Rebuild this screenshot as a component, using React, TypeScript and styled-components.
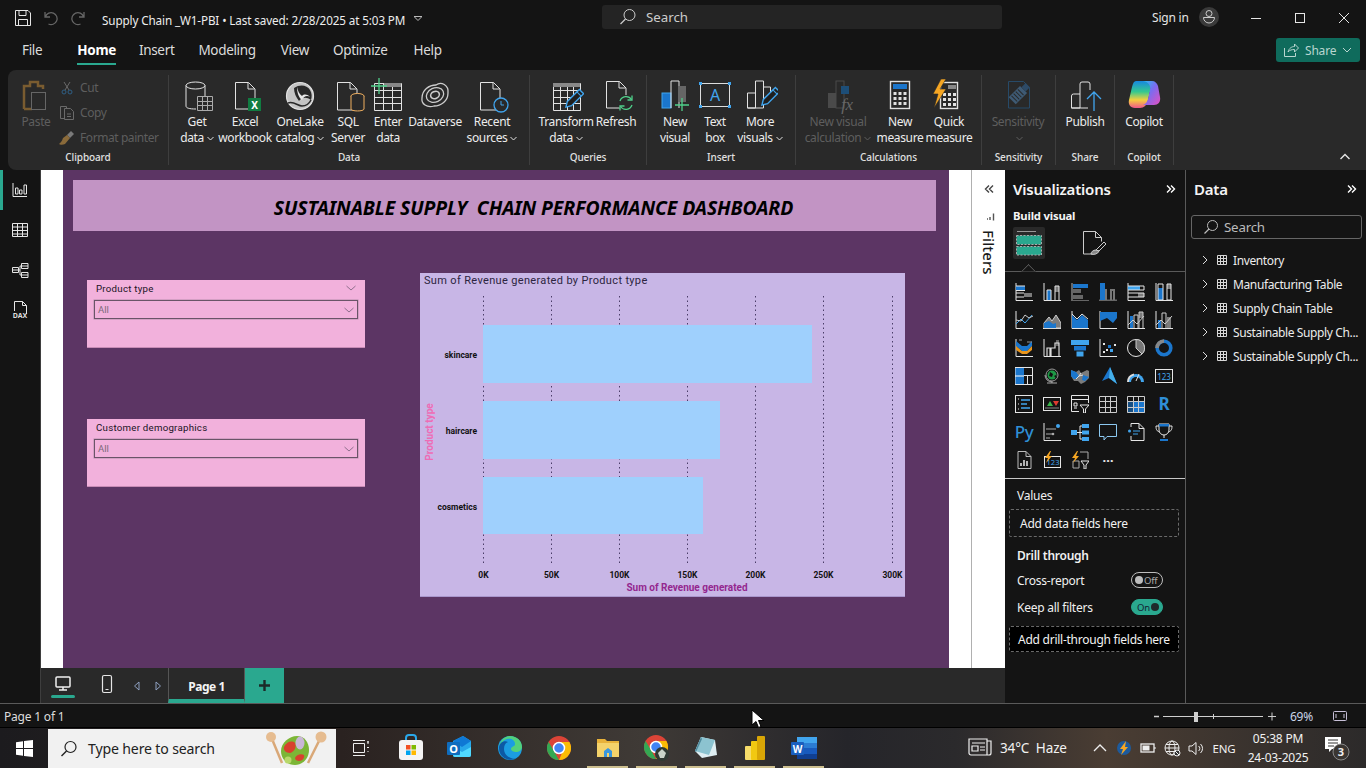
import React from "react";
import styled, { createGlobalStyle } from "styled-components";

const UI = '"Noto Sans", "Open Sans", sans-serif';
const DIN = 'Roboto, "Liberation Sans", sans-serif';

const Global = createGlobalStyle`
  html, body { margin: 0; padding: 0; background: #141414; overflow: hidden; }
  * { box-sizing: border-box; }
  #root { width: 1366px; height: 768px; }
`;

const Shell = styled.div`
  position: relative; width: 1366px; height: 768px; display: flex; flex-direction: column;
  background: #141414; color: #f0f0f0; font-family: ${UI}; font-size: 12px; overflow: hidden;
`;
const TitleBar = styled.div`height: 35px; display: flex; align-items: center; flex: none;`;
const QuickTools = styled.div`width: 102px; display: flex; align-items: center; gap: 11px; padding-left: 14px; flex: none;`;
const DocTitle = styled.div`width: 500px; display: flex; align-items: center; gap: 8px; padding-top: 4px; font-size: 11.7px; letter-spacing: -0.12px; color: #eee; white-space: nowrap; flex: none;`;
const SearchTop = styled.div`width: 400px; height: 24px; background: #242424; border-radius: 3px; display: flex; align-items: center; padding-left: 17px; gap: 9px; color: #ccc; font-size: 13.3px; flex: none; margin-bottom: 1px;`;
const Account = styled.div`margin-left: 150px; width: 62px; display: flex; align-items: center; gap: 10px; font-size: 12px; letter-spacing: -0.2px; color: #e4e4e4; white-space: nowrap; flex: none; margin-bottom: 1px;`;
const Avatar = styled.div`width: 20px; height: 20px; border-radius: 50%; background: #3a3a3a; display: flex; align-items: center; justify-content: center; flex: none;`;
const WinBtns = styled.div`margin-left: 20px; display: flex; gap: 0; flex: none;`;
const WinBtn = styled.div`width: 44px; height: 30px; display: flex; align-items: center; justify-content: center;`;

const MenuBar = styled.div`height: 35px; display: flex; align-items: center; flex: none; padding: 0 0 6px 22px; position: relative;`;
const MenuItem = styled.div<{ $active?: boolean; $gap: number }>`
  position: relative; font-size: 13.5px; letter-spacing: -0.33px; margin-right: ${p => p.$gap}px; line-height: 30px; color: ${p => (p.$active ? "#fff" : "#dcdcdc")}; font-weight: ${p => (p.$active ? 700 : 400)};
  ${p => p.$active && `&::after { content: ""; position: absolute; left: 0; right: 0; bottom: 0; height: 2px; background: #2aa88f; }`}
`;
const ShareBtn = styled.div`
  position: absolute; left: 1276px; top: 3px; width: 84px; height: 24px; background: #0f6b5c; border-radius: 3px;
  display: flex; align-items: center; gap: 6px; padding-left: 7px; color: #b9d6d0; font-size: 12px; letter-spacing: -0.2px;
`;

const Ribbon = styled.div`height: 100px; margin-left: 8px; flex: none; background: #292929; border-radius: 8px 0 0 8px; display: flex; position: relative; padding-top: 5px;`;
const Group = styled.div<{ $w: number; $pad?: number }>`
  width: ${p => p.$w}px; height: 90px; flex: none; border-right: 1px solid #3e3e3e; display: flex; flex-direction: column; padding-left: ${p => p.$pad || 0}px;
`;
const GroupBody = styled.div`height: 75px; display: flex; flex: none;`;
const GroupLabel = styled.div<{ $off?: number }>`
  height: 14px; line-height: 14px; font-size: 10px; letter-spacing: -0.1px; text-align: center; color: #e0e0e0; font-weight: 500; margin-left: ${p => -(p.$off || 0)}px;
`;
const RibBtn = styled.div<{ $w: number; $dim?: boolean }>`
  width: ${p => p.$w}px; flex: none; padding-top: 3px; display: flex; flex-direction: column; align-items: center;
  color: ${p => (p.$dim ? "#5e5e5e" : "#ececec")}; font-size: 12px; letter-spacing: -0.36px; line-height: 16px; text-align: center; white-space: nowrap;
`;
const RibIcon = styled.div`height: 36px; width: 36px; flex: none;`;
const Clip = styled.div`display: flex; padding-left: 8px;`;
const ClipList = styled.div`display: flex; flex-direction: column; margin-left: 2px;`;
const ClipRow = styled.div`height: 26px; display: flex; align-items: center; gap: 4px; color: #5e5e5e; font-size: 12px; letter-spacing: -0.42px; white-space: nowrap;`;
const ClipGlyph = styled.div`width: 18px; height: 18px; flex: none; display: flex; align-items: center; justify-content: center;`;
const Collapse = styled.div`position: absolute; left: 1331px; top: 81px;`;

const Main = styled.div`height: 534px; flex: none; display: flex; border-bottom: 1px solid #5a5a5a;`;
const Rail = styled.div`width: 41px; flex: none; border-right: 1px solid #3e3e3e; display: flex; flex-direction: column; position: relative;`;
const RailItem = styled.div<{ $on?: boolean }>`
  height: 40px; display: flex; align-items: center; justify-content: center; position: relative;
  ${p => p.$on && `&::before { content: ""; position: absolute; left: 0; top: 0; bottom: 0; width: 3px; background: #2aa88f; }`}
`;
const Center = styled.div`width: 964px; flex: none; display: flex; flex-direction: column;`;
const CanvasRow = styled.div`height: 498px; flex: none; display: flex;`;
const Canvas = styled.div`width: 930px; flex: none; background: #fff; padding-left: 22px;`;
const Page = styled.div`position: relative; width: 886px; height: 498px; background: #5c3564;`;
const Banner = styled.div`
  position: absolute; left: 10px; top: 10px; width: 863px; height: 51px; background: #c294c4; color: #000; display: flex; align-items: center; justify-content: center;
  padding: 4px 0 0 58px; font: italic 700 19.4px ${UI}; letter-spacing: -0.1px; white-space: pre;
`;
const Slicer = styled.div<{ $top: number }>`
  position: absolute; left: 24px; top: ${p => p.$top}px; width: 278px; height: 68px; background: #f2b1dc; border-bottom: 1px solid #c88bb6; padding: 0 7px;
`;
const SlicerHead = styled.div`height: 19px; display: flex; align-items: center; justify-content: space-between; padding: 0 1px 3px 2px; font: 400 9.7px ${DIN}; letter-spacing: 0.25px; color: #20141f;`;
const SlicerDrop = styled.div`height: 19px; margin-top: 1px; border: 1px solid #6a5468; box-shadow: 0 0 0 0.5px #b78cac; display: flex; align-items: center; justify-content: space-between; padding: 0 2px 0 3px; font: 400 9.5px ${DIN}; color: #7a6a7a;`;
const ChartCard = styled.div`position: absolute; left: 357px; top: 103px; width: 485px; height: 324px; background: #c8b6e6; border-bottom: 1px solid #a996cc;`;
const ChartTitle = styled.div`height: 17px; padding: 0 0 0 4px; font: 400 11px/15px ${DIN}; letter-spacing: 0.34px; color: #2c2440;`;

const FilterPane = styled.div`width: 34px; flex: none; background: #fff; border-left: 1px solid #b0b0b0; display: flex; flex-direction: column; align-items: center; color: #222;`;
const FilterCollapse = styled.div`margin-top: 14px; height: 10px;`;
const FilterGlyph = styled.div`margin: 18px 0 0 5px; height: 10px;`;
const FilterLabel = styled.div`writing-mode: vertical-rl; margin-top: 8px; font-size: 15px; font-weight: 500; line-height: 20px; letter-spacing: 0.1px; color: #1a1a1a;`;

const TabBar = styled.div`height: 35px; flex: none; background: #292929; display: flex; align-items: stretch;`;
const ViewBtn = styled.div<{ $w: number; $on?: boolean; $low?: boolean; $ml?: number }>`
  width: ${p => p.$w}px; margin-left: ${p => p.$ml || 0}px; flex: none; display: flex; align-items: center; justify-content: center; position: relative; padding-bottom: ${p => (p.$low ? 0 : 4)}px;
  ${p => p.$on && `&::after { content: ""; position: absolute; left: 10px; right: 10px; bottom: 5px; height: 3px; border-radius: 2px; background: #2aa88f; }`}
`;
const PageTab = styled.div`width: 77px; flex: none; border-left: 1px solid #555; border-right: 1px solid #555; border-bottom: 4px solid #2aa88f; display: flex; align-items: center; justify-content: center; font-size: 12px; font-weight: 700; letter-spacing: -0.45px; color: #f4f4f4; padding-top: 6px;`;
const AddTab = styled.div`width: 39px; flex: none; background: #2aa88f; display: flex; align-items: center; justify-content: center;`;

const Pane = styled.div<{ $w?: number }>`${p => (p.$w ? `width:${p.$w}px;flex:none;` : "flex:1;")} border-right: ${p => (p.$w ? "1px solid #5a5a5a" : "0")}; display: flex; flex-direction: column;`;
const PaneHead = styled.div`height: 38px; flex: none; display: flex; align-items: center; justify-content: space-between; padding: 0 9px 0 8px; font-size: 15px; font-weight: 600; letter-spacing: -0.2px; color: #f4f4f4;`;
const BuildLabel = styled.div`height: 14px; line-height: 14px; margin-top: 1px; padding-left: 8px; font-size: 11.3px; font-weight: 700; letter-spacing: -0.2px; color: #f4f4f4; flex: none;`;
const BuildTabs = styled.div`height: 32px; margin-top: 4px; padding-left: 8px; display: flex; align-items: center; flex: none;`;
const BuildTab = styled.div<{ $on?: boolean; $ml?: number }>`width: 32px; height: 32px; margin-left: ${p => p.$ml || 0}px; border-radius: 2px; background: ${p => (p.$on ? "#292929" : "transparent")}; display: flex; align-items: center; justify-content: center;`;
const Notched = styled.div`
  height: 1px; margin-top: 12px; background: #5a5a5a; position: relative; flex: none;
  &::after { content: ""; position: absolute; left: 18px; top: -5px; width: 10px; height: 10px; background: #141414; border-left: 1px solid #5a5a5a; border-top: 1px solid #5a5a5a; transform: rotate(45deg); clip-path: polygon(0 0, 100% 0, 0 100%); }
`;
const VizGrid = styled.div`display: grid; grid-template-columns: repeat(6, 28px); grid-auto-rows: 28px; padding: 6px 0 0 5px; height: 206px; flex: none;`;
const VizCell = styled.div`display: flex; align-items: center; justify-content: center;`;
const VizGlyph = styled.div<{ $size: number; $color: string; $weight: number; $pb: number }>`font-size: ${p => p.$size}px; line-height: 24px; padding-bottom: ${p => p.$pb}px; font-weight: ${p => p.$weight}; color: ${p => p.$color}; letter-spacing: -0.3px; white-space: nowrap;`;
const SolidRule = styled.div`height: 1px; background: #c8c8c8; flex: none;`;
const FieldLabel = styled.div<{ $bold?: boolean; $mt?: number }>`padding-left: 12px; height: 16px; line-height: 16px; margin-top: ${p => p.$mt || 0}px; font-size: 12px; letter-spacing: -0.25px; font-weight: ${p => (p.$bold ? 600 : 400)}; color: #f0f0f0; flex: none;`;
const DropWell = styled.div<{ $h: number; $black?: boolean; $mt: number; $pl: number }>`
  height: ${p => p.$h}px; margin: ${p => p.$mt}px 6px 0 4px; border: 1px dashed #6a6a6a; border-radius: 2px; background: ${p => (p.$black ? "#000" : "transparent")};
  display: flex; align-items: center; padding-left: ${p => p.$pl}px; font-size: 12px; letter-spacing: -0.25px; color: #f2f2f2; flex: none; white-space: nowrap;
`;
const ToggleRow = styled.div<{ $mt: number }>`display: flex; align-items: center; justify-content: space-between; height: 16px; margin-top: ${p => p.$mt}px; padding: 0 22px 0 12px; font-size: 12px; letter-spacing: -0.25px; color: #f0f0f0; flex: none;`;
const Toggle = styled.div<{ $on?: boolean }>`
  width: 32px; height: 16px; border-radius: 8px; display: flex; align-items: center; justify-content: ${p => (p.$on ? "flex-end" : "flex-start")}; gap: 1px; padding: 0 3px; font-size: 9.5px; letter-spacing: -0.2px;
  background: ${p => (p.$on ? "#2aa88f" : "transparent")}; border: 1px solid ${p => (p.$on ? "#2aa88f" : "#bdbdbd")}; color: ${p => (p.$on ? "#123" : "#aaa")};
`;
const Knob = styled.span<{ $on?: boolean }>`width: 8px; height: 8px; border-radius: 50%; background: ${p => (p.$on ? "#1f2b2b" : "#bdbdbd")}; flex: none;`;
const DataSearch = styled.div`height: 24px; margin: 7px 4px 0 5px; border: 1px solid #666; border-radius: 3px; display: flex; align-items: center; gap: 5px; padding-left: 11px; font-size: 13.3px; letter-spacing: -0.2px; color: #bbb; flex: none;`;
const TreeList = styled.div`padding: 9px 0 0 14px; display: flex; flex-direction: column; flex: none;`;
const TreeRow = styled.div`height: 24px; display: flex; align-items: center; gap: 6px; font-size: 12px; letter-spacing: -0.38px; color: #ececec; white-space: nowrap;`;
const TreeName = styled.span`margin-left: -1px;`;

const StatusBar = styled.div`height: 24px; flex: none; display: flex; align-items: center; padding: 1px 0 0 4px; font-size: 12px; letter-spacing: -0.2px; color: #ddd; border-bottom: 1px solid #000; position: relative;`;
const ZoomBar = styled.div`margin-left: auto; display: flex; align-items: center; margin-right: 19px;`;
const ZoomPct = styled.span`margin: 0 20px 0 13px; font-size: 12px; color: #c9d5e8;`;

const TaskBar = styled.div`height: 40px; flex: none; display: flex; align-items: center; background: linear-gradient(90deg, #1c1b1e 0%, #2a2220 25%, #3f3a36 47%, #25252a 62%, #2b2a2c 70%, #4a3d33 81%, #2c2a2a 100%); position: relative;`;
const StartBtn = styled.div`width: 48px; height: 40px; display: flex; align-items: center; justify-content: center; flex: none;`;
const TaskSearch = styled.div`width: 288px; height: 39px; margin-top: 1px; background: #f1f1f1; display: flex; align-items: center; padding-left: 12px; gap: 10px; color: #222; font-size: 14.1px; letter-spacing: -0.15px; flex: none; position: relative;`;
const Doodle = styled.div`margin-left: auto; margin-right: 8px; flex: none;`;
const TaskApps = styled.div`display: flex; padding-left: 0; flex: none;`;
const TaskApp = styled.div<{ $w: number; $run?: boolean }>`
  width: ${p => p.$w}px; height: 40px; display: flex; align-items: center; justify-content: center; position: relative; flex: none;
  ${p => p.$run && `&::after { content: ""; position: absolute; left: 4px; right: 4px; bottom: 0; height: 2px; background: #cdbf8f; }`}
`;
const Tray = styled.div`position: absolute; left: 968px; top: 0; width: 398px; height: 40px; display: flex; align-items: center; color: #f2f2f2; font-size: 13px;`;
const TrayIcon = styled.div<{ $w: number; $ml?: number }>`width: ${p => p.$w}px; margin-left: ${p => p.$ml || 0}px; flex: none; display: flex; align-items: center; justify-content: center;`;
const Weather = styled.div`width: 104px; padding-left: 32px; white-space: pre; flex: none; font-size: 13.5px; letter-spacing: -0.15px;`;
const Lang = styled.div`width: 32px; text-align: center; font-size: 11.5px; letter-spacing: -0.2px; flex: none;`;
const Clock = styled.div`width: 74px; margin-left: 1px; text-align: center; font-size: 12px; line-height: 19px; letter-spacing: -0.2px; flex: none;`;
const NewsSlot = styled.div`position: absolute; left: 968px; top: 9px; width: 24px; height: 20px;`;
const Cursor = styled.div`position: absolute; left: 751px; top: 709px; width: 14px; height: 20px;`;

/* ---------- Icons ---------- */
const W = "#e6e6e6", G = "#7c7c7c", B = "#1b76cc", LB = "#41a5ee";
const Ic = ({ s = 18, v = 18, children }: { s?: number; v?: number; children: React.ReactNode }) => (
  <svg width={s} height={s} viewBox={`0 0 ${v} ${v}`} fill="none" stroke={W} strokeWidth={1} style={{ display: "block" }}>{children}</svg>
);
const Rb = ({ children }: { children: React.ReactNode }) => (
  <svg width={36} height={36} viewBox="0 0 36 36" fill="none" stroke="#e2e2e2" strokeWidth={1} style={{ display: "block" }}>{children}</svg>
);
const Chev = ({ c = "#e2e2e2" }: { c?: string }) => (
  <svg width="7" height="5" viewBox="0 0 7 5" fill="none" stroke={c} strokeWidth="1" style={{ display: "inline-block", marginLeft: 3, verticalAlign: "1px" }}><path d="M.5 1l3 3 3-3" /></svg>
);
const Doc = ({ x, y, w, h }: { x: number; y: number; w: number; h: number }) => (
  <path d={`M${x + .5} ${y + .5}h${w - 7}l6.5 6.5V${y + h}H${x + .5}zM${x + w - 7} ${y + .5}v6.5h6.5`} />
);
const Grid = ({ x, y, w, h, c = 4, r = 4, col = "#e2e2e2" }: { x: number; y: number; w: number; h: number; c?: number; r?: number; col?: string }) => {
  const d: string[] = [`M${x + .5} ${y + .5}h${w}v${h}h${-w}z`];
  for (let i = 1; i < c; i++) d.push(`M${x + .5 + Math.round(w * i / c)} ${y}v${h}`);
  for (let i = 1; i < r; i++) d.push(`M${x} ${y + .5 + Math.round(h * i / r)}h${w}`);
  return <path d={d.join("")} stroke={col} />;
};
const Pencil = ({ x, y }: { x: number; y: number }) => (
  <g transform={`translate(${x} ${y}) rotate(45)`}><path d="M-3-12h6v17l-3 5-3-5z" fill="#1f1f1f" stroke={LB} strokeWidth="1.4" /><path d="M-3-8.5h6" stroke={LB} /></g>
);
const Axis = () => <path d="M1 0v17.5h17M1 17.5" />;

type Glyph = { glyph: string; size: number; color: string; weight: number; pb: number };

const viz: (React.ReactNode | Glyph)[] = [
  <><Axis /><rect x="1" y="3" width="9" height="4" fill={B} stroke="none" /><rect x="9" y="10" width="8" height="4" fill={G} stroke="none" /><path d="M1 7.5h9M1 3h9M1 14h8M1 10h8" /></>,
  <><Axis /><rect x="4" y="7" width="4" height="10" fill={B} stroke="none" /><rect x="12" y="3" width="4" height="6" fill={G} stroke="none" /><path d="M12 17V3h4v14M4 17V7h4v10" /></>,
  <><path d="M1 0v18h17" stroke="#666" strokeWidth="2" /><rect x="2" y="1" width="15" height="4" fill={B} stroke="none" /><rect x="2" y="6" width="8" height="4" fill="#666" stroke="none" /><rect x="2" y="12" width="10" height="4" fill="#666" stroke="none" /></>,
  <><path d="M0 17.5h18" stroke="#666" strokeWidth="2" /><rect x="1" y="0" width="5" height="17" fill={B} stroke="none" /><path d="M7 17V6M12 17V7h3v10" stroke="#777" strokeWidth="2" /></>,
  <><Axis /><rect x="1" y="3" width="12" height="4" fill={LB} stroke="none" /><rect x="11" y="10" width="6" height="4" fill={G} stroke="none" /><path d="M1 3h16v4H1M1 10h16v4H1" /></>,
  <><Axis /><rect x="3" y="5" width="5" height="12" fill={B} stroke="none" /><rect x="12" y="1" width="4" height="5" fill={G} stroke="none" /><path d="M3 1h5v16H3zM12 1h4v16h-4z" /></>,
  <><Axis /><path d="M1 13l5-5 4 4 7-8" stroke={LB} /><path d="M1 9l5 1 4-6 4 3 4-2" stroke="#ccc" /></>,
  <><path d="M0 17.5h18" /><path d="M1 17V12l5-6 3 4 4-6 5 8v5z" fill={G} stroke="#ccc" /><path d="M1 17v-5l5-2 4 3 3-1 0 5z" fill={B} stroke="none" /></>,
  <><Axis /><path d="M1 4l5 5 5-5 6 5v8H1z" fill={B} stroke="none" /><path d="M1 3l5 5 5-5 6 5" /></>,
  <><Axis /><path d="M1 1h17v6l-4 5-6-5-7 3z" fill={B} stroke="none" /></>,
  <><Axis /><rect x="3" y="5" width="3" height="12" fill={B} stroke="none" /><rect x="12" y="1" width="4" height="6" fill={G} stroke="none" /><path d="M7 17V4h4v13M12 17V1h4v16M1 14l5-5 4 4 7-8" stroke="#ccc" /></>,
  <><Axis /><rect x="3" y="9" width="3" height="8" fill={B} stroke="none" /><rect x="12" y="6" width="4" height="11" fill={G} stroke="none" /><path d="M7 17V2h4v15M1 14l5-5 4 4 7-8" stroke="#ccc" /></>,
  <><Axis /><path d="M1 2l6 5 5 0 5-5v5l-5 5H7L1 7z" fill={B} stroke="none" /><path d="M1 7l6 5h5l5-5v4l-5 4H7l-6-4z" fill="#e8951c" stroke="none" /><path d="M4 1h3M12 3h5" stroke="#999" /></>,
  <><Axis /><path d="M4 17V9h3v8M8 17V9h4V4h4v13" stroke="#ddd" strokeWidth="1.2" /><rect x="13" y="1" width="3" height="6" fill={W} stroke="none" opacity=".4" /></>,
  <><rect x="0" y="1" width="18" height="5" fill={LB} stroke="none" /><rect x="3" y="7" width="12" height="4.5" fill={B} stroke="none" /><rect x="5.5" y="12.5" width="7" height="5" fill={LB} stroke="none" /></>,
  <><Axis /><rect x="4" y="4" width="2" height="2" fill={W} stroke="none" /><rect x="4" y="12" width="2" height="2" fill={W} stroke="none" /><rect x="9" y="6" width="3" height="3" fill={B} stroke="none" /><rect x="11" y="10" width="3" height="3" fill={LB} stroke="none" /><rect x="15" y="5" width="2" height="2" fill={W} stroke="none" /><rect x="7" y="10" width="2" height="2" fill={W} stroke="none" /></>,
  <><circle cx="9" cy="9" r="8.5" /><path d="M9 9V.5A8.5 8.5 0 0 1 15 15z" fill="#777" stroke="#ccc" /></>,
  <><circle cx="9" cy="9" r="6.8" stroke={B} strokeWidth="3.6" /><path d="M9 2a7 7 0 0 0-7 7" stroke="#888" strokeWidth="3.6" /></>,
  <><rect x="0" y="0" width="9" height="18" fill={B} stroke="none" /><path d="M0 .5h17.5v17H0zM9 8.5h9M12.5 8.5v9" /><path d="M0 9h9" stroke="#fff" /></>,
  <><circle cx="9" cy="8" r="6" stroke="#999" /><circle cx="9" cy="8" r="4.5" fill="#1e9a46" stroke="none" /><path d="M7 5l3 2-1 3-3-1zM11 9l2-1v3z" fill="#111" stroke="none" /><path d="M4 16h10M9 14v2M2 8a7 7 0 0 0 7 7" stroke="#aaa" /></>,
  <><path d="M0 3l5 2 3-2 2 3 6-3 2 1v7l-4 4-4 2-3-3H3L0 9z" fill={G} stroke="none" /><path d="M0 3l5 2 3 4-3 3H3L0 9zM12 8l6 2-4 4-3-1z" fill={B} stroke="none" /><path d="M8 9l2-3M5 12l3-3 4-1" stroke="#ddd" /></>,
  <><path d="M11 0L3 14l7-3 8 6z" fill={B} stroke="none" /><path d="M11 0l-1 11 8 6z" fill="#45b0ea" stroke="none" /></>,
  <><path d="M1 15a8 8 0 0 1 16 0z" stroke="none" fill={LB} /><path d="M4 15a5 5 0 0 1 10 0z" fill="#141414" stroke="none" /><path d="M1 15a8 8 0 0 1 6-7.6" stroke="#ddd" strokeWidth="2" /><path d="M9 14l3-7" stroke="#ddd" /></>,
  <><rect x=".5" y="2.5" width="17" height="13" /><text x="9" y="13" fontFamily={UI} fontSize="8" fill={LB} stroke="none" textAnchor="middle">123</text></>,
  <><rect x=".5" y=".5" width="17" height="17" /><path d="M3 4h1M3 9h1M3 14h1" /><path d="M6 5h9M6 9h6M6 13h9" stroke={LB} strokeWidth="1.6" /></>,
  <><rect x=".5" y="2.5" width="17" height="13" /><path d="M4 11l3-5 3 5z" fill="#39b54a" stroke="none" /><path d="M10 6h6l-3 5z" fill="#e03c31" stroke="none" /><path d="M2 13h14" stroke="#888" /></>,
  <><path d="M17.5 8V.5H.5v16H8M.5 4.5h17M3 8h3v3H3zM3 13h3" /><path d="M9 10h9l-3.5 4v4h-2v-4z" /></>,
  <Grid x={0} y={1} w={17} h={16} c={3} r={3} col="#ccc" />,
  <><rect x="6" y="6" width="12" height="12" fill={B} stroke="none" /><rect x="0" y="6" width="6" height="12" fill={B} stroke="none" opacity=".6" /><Grid x={0} y={1} w={17} h={16} c={3} r={3} col="#ccc" /></>,
  { glyph: "R", size: 17, color: "#2f8fd6", weight: 700, pb: 0 },
  { glyph: "Py", size: 17, color: "#2f8fd6", weight: 500, pb: 0 },
  <><Axis /><circle cx="15" cy="3" r="2" fill={LB} stroke="none" /><path d="M3 6h10M3 11h7M3 15h4" stroke="#aaa" /><circle cx="10" cy="11" r="1.3" fill="#aaa" stroke="none" /></>,
  <><rect x="0" y="7" width="6" height="5" fill={LB} stroke="none" /><path d="M6 9.5h3M9 3v13M9 3h2M9 9.5h2M9 16h2" /><rect x="11" y="1" width="7" height="4" fill={LB} stroke="none" /><rect x="11" y="7.5" width="7" height="4" fill={LB} stroke="none" /><rect x="11" y="14" width="7" height="4" fill={LB} stroke="none" /></>,
  <path d="M.5 1.5h17v12H8l-3 3.5v-3.5H.5z" stroke="#8cc8f0" />,
  <><path d="M4 4V.5h8l5 5v12H4V13M12 .5V5.500h5" /><circle cx="2.500" cy="8" r="1.500" fill={LB} stroke="none" /><path d="M6 8h7M6 11h5" stroke={LB} /></>,
  <><path d="M4 1h10v6a5 5 0 0 1-10 0zM4 3H1c0 4 1 5 3.500 6M14 3h3c0 4-1 5-3.500 6M9 12v3M5 17.500h8" /><rect x="4" y="1" width="10" height="2.500" fill={B} stroke="none" /><rect x="5" y="16" width="8" height="2" fill={B} stroke="none" /></>,
  <><path d="M3 .5h8l5 5v12H3zM11 .5v5h5" stroke="#bbb" /><path d="M6 15v-3M9 15V9M12 15v-5" stroke="#ddd" strokeWidth="1.6" /></>,
  <><rect x="1.500" y="5.500" width="16" height="11" /><text x="10" y="14" fontFamily={UI} fontSize="7.500" fill={LB} stroke="none" textAnchor="middle">123</text><path d="M7 0L2 7h3l-2 5 6-7H6l2-5z" fill="#f5a623" stroke="none" /></>,
  <><path d="M9 1h8v7M2 10h6v7H2zM2 10" stroke="#aaa" /><path d="M10 10h8l-3 4v4h-2v-4z" /><path d="M6 0L1 7h3l-2 5 6-7H5l2-5z" fill="#f5a623" stroke="none" /></>,
  { glyph: "…", size: 13, color: W, weight: 700, pb: 6 },
];

const isGlyph = (v: unknown): v is Glyph => typeof v === "object" && v !== null && "glyph" in v;

const SmallChev = () => <Ic s={12} v={12}><path d="M1.500 4l4.500 4 4.500-4" stroke="#8f6f8d" /></Ic>;
const TableMini = () => (
  <Ic s={12} v={12}><path d="M1.500 1.500h9v9h-9zM1.500 4.500h9M1.500 7.500h9M4.500 1.500v9M7.500 1.500v9" stroke="#d8d8d8" /></Ic>
);
const Collapser = ({ c = "#fff", dir = "r" }: { c?: string; dir?: "r" | "l" }) => (
  <Ic s={10} v={10}><path d={dir === "r" ? "M1 1.500l3.500 3.500L1 8.500M5 1.500l3.500 3.500L5 8.500" : "M9 1.500L5.500 5 9 8.500M5 1.500L1.500 5 5 8.500"} stroke={c} strokeWidth={1.4} /></Ic>
);

const ribbonData: { title: string; w: number; pad: number; items: { w: number; icon: React.ReactNode; lines: React.ReactNode[]; dim?: boolean }[] }[] = [
  { title: "Data", w: 361, pad: 7, items: [
    { w: 42, lines: ["Get", <>data<Chev /></>], icon: <Rb><ellipse cx="16.500" cy="7.500" rx="9.500" ry="3.500" /><path d="M7 7.500V28c0 2 3 3 10 3M26 7.500V18" /><Grid x={18} y={18} w={15} h={14} c={3} r={3} col="#aaa" /></Rb> },
    { w: 54, lines: ["Excel", "workbook"], icon: <Rb><Doc x={8} y={4} w={20} h={27} /><rect x="21" y="20" width="13" height="13" fill="#107c41" stroke="none" /><text x="27.500" y="30.500" fontFamily={UI} fontSize="10" fontWeight="700" fill="#fff" stroke="none" textAnchor="middle">X</text></Rb> },
    { w: 56, lines: ["OneLake", <>catalog<Chev /></>], icon: <Rb><circle cx="18" cy="18" r="13.500" fill="#c4c4c4" stroke="#e2e2e2" strokeWidth="1.200" /><path d="M12 10c6-4 13-3 16 2 2 3 2 7 1 10-5-4-10-2-12 1-3-4-5-8-5-13z" fill="#292929" stroke="none" /><path d="M15 9c0 6 2 11 5 13 2-4 5-5 8-3-3-3-6-3-8-1-3-2-4-5-5-9z" fill="#e8e8e8" stroke="none" /><path d="M6 25c6-2 10 3 14 3 4 0 7-2 9-6" stroke="#292929" strokeWidth="1.500" /></Rb> },
    { w: 40, lines: ["SQL", "Server"], icon: <Rb><Doc x={7} y={4} w={20} h={28} /><ellipse cx="27.500" cy="18" rx="6.500" ry="2.500" stroke="#f0b060" fill="#292929" /><path d="M21 18v13c0 2.600 13 2.600 13 0V18" stroke="#f0b060" fill="#292929" /></Rb> },
    { w: 40, lines: ["Enter", "data"], icon: <Rb><Grid x={4} y={5} w={27} h={27} c={3} r={4} /><rect x="14" y="5" width="17" height="4" fill="#888" stroke="none" /><path d="M9 0v16M1 8h16" stroke="#4fd08a" strokeWidth="1.300" /></Rb> },
    { w: 54, lines: ["Dataverse", ""], icon: <Rb><path d="M5 20c0-8 7-13 14-13 5-4 13 0 12 8 0 8-7 13-14 13-7 2-13-2-12-8z" strokeWidth="1.300" stroke="#ccc" /><ellipse cx="18" cy="17" rx="9" ry="7" transform="rotate(-25 18 17)" stroke="#ccc" strokeWidth="1.300" /><ellipse cx="18" cy="17" rx="4.500" ry="3.500" transform="rotate(-25 18 17)" stroke="#ccc" strokeWidth="1.600" /></Rb> },
    { w: 60, lines: ["Recent", <>sources<Chev /></>], icon: <Rb><Doc x={6} y={4} w={20} h={28} /><circle cx="27" cy="27" r="7" fill="#292929" stroke={LB} strokeWidth="1.300" /><path d="M27 23v4h3" stroke={LB} /></Rb> },
  ]},
  { title: "Queries", w: 117, pad: 10, items: [
    { w: 52, lines: ["Transform", <>data<Chev /></>], icon: <Rb><Grid x={5} y={5} w={27} h={27} c={4} r={4} /><rect x="5" y="5" width="27" height="4" fill="#888" stroke="none" /><Pencil x={25} y={22} /></Rb> },
    { w: 48, lines: ["Refresh", ""], icon: <Rb><Doc x={8} y={3} w={20} h={27} /><circle cx="28" cy="25" r="8" fill="#292929" stroke="none" /><path d="M22 23a6.500 6.500 0 0 1 11.500-1.500M34 27a6.500 6.500 0 0 1-11.500 1.500" stroke="#4fd08a" strokeWidth="1.300" /><path d="M34 17.500v4.500h-4.500M22 32.500V28h4.500" stroke="#4fd08a" strokeWidth="1.300" /></Rb> },
  ]},
  { title: "Insert", w: 149, pad: 8, items: [
    { w: 40, lines: ["New", "visual"], icon: <Rb><rect x="5" y="15" width="9" height="15" fill={B} stroke={LB} /><path d="M14 30V3h8v27" /><rect x="21" y="8" width="8" height="16" fill="#666" stroke="none" /><path d="M25 20v13M18 27h14" stroke="#4fd08a" strokeWidth="1.300" /></Rb> },
    { w: 40, lines: ["Text", "box"], icon: <Rb><rect x="3.500" y="5.500" width="29" height="23" stroke="#ddd" /><text x="18" y="23" fontFamily={UI} fontSize="16" fill={LB} stroke="none" textAnchor="middle">A</text><rect x="2" y="4" width="3" height="3" fill={LB} stroke="none" /><rect x="31" y="4" width="3" height="3" fill={LB} stroke="none" /><rect x="2" y="27" width="3" height="3" fill={LB} stroke="none" /><rect x="31" y="27" width="3" height="3" fill={LB} stroke="none" /></Rb> },
    { w: 50, lines: ["More", <>visuals<Chev /></>], icon: <Rb><path d="M5.500 30V15h8v15zM13.500 15V3h8v27M21.500 9h7v10M5.500 30h16" /><Pencil x={27} y={20} /></Rb> },
  ]},
  { title: "Calculations", w: 186, pad: 6, items: [
    { w: 72, dim: true, lines: ["New visual", <>calculation<Chev c="#5e5e5e" /></>], icon: <Rb><rect x="8" y="15" width="8" height="15" fill="#4a4a4a" stroke="none" /><rect x="16" y="3" width="8" height="27" fill="none" stroke="#4a4a4a" /><rect x="21" y="8" width="8" height="8" fill="#1d4e78" stroke="none" /><text x="27" y="32" fontFamily='"Liberation Serif", serif' fontStyle="italic" fontSize="17" fill="#666" stroke="none" textAnchor="middle">fx</text></Rb> },
    { w: 52, lines: ["New", "measure"], icon: <Rb><rect x="8.500" y="3.500" width="19" height="27" strokeWidth="1.400" /><rect x="11" y="6" width="14" height="5" fill={B} stroke="none" />{[14, 19, 24].map(y => [11.500, 16.500, 21.500].map(x => <rect key={`${x}${y}`} x={x} y={y} width="3" height="3" fill="#e2e2e2" stroke="none" />))}</Rb> },
    { w: 46, lines: ["Quick", "measure"], icon: <Rb><rect x="9.500" y="4.500" width="17" height="26" strokeWidth="1.400" /><rect x="17" y="7" width="8" height="4" fill="#888" stroke="none" />{[15, 20, 25].map(y => [12, 17, 22].map(x => <rect key={`${x}${y}`} x={x} y={y} width="3" height="3" fill="#e2e2e2" stroke="none" />))}<path d="M10 1L2 16h5L3 30l12-19H9l6-10z" fill="#f5a623" stroke="#292929" strokeWidth=".6" /></Rb> },
  ]},
  { title: "Sensitivity", w: 74, pad: 0, items: [
    { w: 72, dim: true, lines: ["Sensitivity", <Chev c="#5e5e5e" />], icon: <Rb><path d="M8.500 3.500h15l6 6V30h-21z" stroke="#274a68" /><g transform="rotate(-45 20 15)" stroke="none"><rect x="9" y="10" width="16" height="10" fill="#3e5a74" /><rect x="25" y="12" width="6" height="6" fill="#2d4a66" /><path d="M12 11v8M15 11v8M18 11v8M21 11v8" stroke="#292929" /></g></Rb> },
  ]},
  { title: "Share", w: 59, pad: 0, items: [
    { w: 58, lines: ["Publish", ""], icon: <Rb><path d="M4.500 30V18a2 2 0 0 1 2-2H13v14zM13 16V6a2 2 0 0 1 2-2h6a2 2 0 0 1 2 2v6M4.500 30H21" /><path d="M27 33V14M20 21l7-7 7 7" stroke={LB} strokeWidth="1.300" /></Rb> },
  ]},
  { title: "Copilot", w: 59, pad: 0, items: [
    { w: 58, lines: ["Copilot", ""], icon: <Rb><defs><linearGradient id="cpA" x1="0" y1="0" x2="1" y2="1"><stop offset="0" stopColor="#25c2ee" /><stop offset=".45" stopColor="#7a6cf0" /><stop offset="1" stopColor="#e34fc0" /></linearGradient><linearGradient id="cpB" x1="0" y1="0" x2="0" y2="1"><stop offset="0" stopColor="#1787e0" /><stop offset=".4" stopColor="#35c98f" /><stop offset=".7" stopColor="#f5cf3e" /><stop offset="1" stopColor="#f0568a" /></linearGradient></defs><path d="M10 3h11c4 0 5 3 4 6l-3 13c-1 5-4 8-8 8H9c-5 0-7-4-6-8l3-13C7 5 8 3 10 3z" fill="url(#cpB)" stroke="none" /><path d="M17 3h9c3 0 5 2 6 5l2 11c1 5-2 8-6 8H17c3-1 4-3 5-6l2-9c1-4-1-8-7-9z" fill="url(#cpA)" stroke="none" /></Rb> },
  ]},
];

const App = () => (
  <Shell>
    <Global />
    <TitleBar>
      <QuickTools>
        <Ic s={18} v={18}><path d="M1.500 1.500h12.500l2.500 2.500v12.500H1.500zM5 1.500v5h7v-5M4.500 16.500V10.500h9v6" /></Ic>
        <Ic s={16} v={16}><path d="M2 2v5h5M2.500 6.500a6 6 0 1 1 3 7.500" stroke="#666" strokeWidth="1.300" /></Ic>
        <Ic s={16} v={16}><path d="M14 2v5H9M13.500 6.500a6 6 0 1 0-3 7.500" stroke="#666" strokeWidth="1.300" /></Ic>
      </QuickTools>
      <DocTitle>
        Supply Chain _W1-PBI • Last saved: 2/28/2025 at 5:03 PM
        <Ic s={10} v={10}><path d="M1 1.500h8M1.500 2l3.500 3.500L8.500 2" stroke="#bbb" /></Ic>
      </DocTitle>
      <SearchTop>
        <Ic s={18} v={18}><circle cx="10.500" cy="7" r="5.500" stroke="#ccc" /><path d="M6.500 11L1.500 16" stroke="#ccc" strokeWidth="1.300" /></Ic>
        Search
      </SearchTop>
      <Account>
        Sign in
        <Avatar><Ic s={16} v={16}><circle cx="8" cy="4.500" r="3" stroke="#ccc" /><path d="M2.500 8.500h11a5.500 5.500 0 0 1-11 0z" stroke="#ccc" /></Ic></Avatar>
      </Account>
      <WinBtns>
        <WinBtn><Ic s={12} v={12}><path d="M1 6.500h10" /></Ic></WinBtn>
        <WinBtn><Ic s={12} v={12}><rect x="1.500" y="1.500" width="9" height="9" /></Ic></WinBtn>
        <WinBtn><Ic s={12} v={12}><path d="M1 1l10 10M11 1L1 11" /></Ic></WinBtn>
      </WinBtns>
    </TitleBar>
    <MenuBar>
      <MenuItem $gap={35}>File</MenuItem>
      <MenuItem $active $gap={23}>Home</MenuItem>
      <MenuItem $gap={24}>Insert</MenuItem>
      <MenuItem $gap={25}>Modeling</MenuItem>
      <MenuItem $gap={24}>View</MenuItem>
      <MenuItem $gap={26}>Optimize</MenuItem>
      <MenuItem $gap={0}>Help</MenuItem>
      <ShareBtn>
        <Ic s={16} v={16}><path d="M1.500 6v8.500h11V11M5 10c1-4 4-5.500 6.500-5.500V2l4 4-4 4V7.500C9 7.500 6.500 8 5 10z" stroke="#b9d6d0" /></Ic>
        Share
        <Ic s={10} v={10}><path d="M1 3l4 4 4-4" stroke="#b9d6d0" /></Ic>
      </ShareBtn>
    </MenuBar>
    <Ribbon>
      <Group $w={161}>
        <GroupBody>
          <Clip>
            <RibBtn $w={40} $dim>
              <RibIcon><Rb><path d="M6 31V8h6V4h8v4h5v3" stroke="#7a5c30" strokeWidth="2.500" /><path d="M6 31h8" stroke="#7a5c30" strokeWidth="2.500" /><rect x="13.500" y="14.500" width="14" height="17" stroke="#666" /></Rb></RibIcon>
              Paste
            </RibBtn>
            <ClipList>
              <ClipRow><ClipGlyph><Ic s={14} v={14}><path d="M4 1l5 8M10 1L5 9" stroke="#6a6a6a" /><circle cx="4" cy="11" r="2" stroke="#2f5f85" /><circle cx="10" cy="11" r="2" stroke="#2f5f85" /></Ic></ClipGlyph>Cut</ClipRow>
              <ClipRow><ClipGlyph><Ic s={15} v={15}><path d="M4.500 13.500h-4V1.500h6v2" stroke="#6a6a6a" /><path d="M4.500 3.500h6l3 3v8h-9zM7 9h4M7 11.500h4" stroke="#6a6a6a" /></Ic></ClipGlyph>Copy</ClipRow>
              <ClipRow><ClipGlyph><Ic s={18} v={18}><path d="M13 2l3 3-4 4-3-3z" fill="#7a7a7a" stroke="none" /><path d="M9 6l3 3-5 6c-2 1-5 1-6 0 2-2 3-3 4-6z" fill="#8a6a3a" stroke="none" /></Ic></ClipGlyph>Format painter</ClipRow>
            </ClipList>
          </Clip>
        </GroupBody>
        <GroupLabel>Clipboard</GroupLabel>
      </Group>
      {ribbonData.map(g => (
        <Group key={g.title} $w={g.w} $pad={g.pad}>
          <GroupBody>
            {g.items.map((it, i) => (
              <RibBtn key={i} $w={it.w} $dim={it.dim}>
                <RibIcon>{it.icon}</RibIcon>
                <div>{it.lines[0]}</div>
                <div>{it.lines[1]}</div>
              </RibBtn>
            ))}
          </GroupBody>
          <GroupLabel $off={g.pad}>{g.title}</GroupLabel>
        </Group>
      ))}
      <Collapse><Ic s={12} v={12}><path d="M1.500 8L6 3.500 10.500 8" strokeWidth="1.400" /></Ic></Collapse>
    </Ribbon>
    <Main>
      <Rail>
        <RailItem $on><Ic s={16} v={16}><path d="M1 1v13.500h14M3.500 12V6h2.500v6zM7.500 12V8H10v4zM12 12V3h2.500v9z" /></Ic></RailItem>
        <RailItem><Ic s={16} v={16}><path d="M.5 1.500h15v13H.5zM.5 5h15M.5 8.500h15M.5 12h15M5.500 1.500v13M10.500 1.500v13" /></Ic></RailItem>
        <RailItem><Ic s={18} v={18}><path d="M1.500 6.500h6v5h-6zM10.500 2.500h6.500v5H10.500zM10.500 11.500h6.500v5H10.500zM7.500 9h1.500M9 5v9M9 5h1.500M9 14h1.500M1.500 9h6M10.500 5h6.500M10.500 14h6.500" /></Ic></RailItem>
        <RailItem><Ic s={18} v={18}><path d="M3.500 10V.5h8l4 4V13M11.500 .5v4h4" /><text x="9" y="16.500" fontFamily={UI} fontSize="7" fontWeight="700" fill="#ddd" stroke="none" textAnchor="middle">DAX</text></Ic></RailItem>
      </Rail>
      <Center>
        <CanvasRow>
          <Canvas>
            <Page>
              <Banner>SUSTAINABLE SUPPLY  CHAIN PERFORMANCE DASHBOARD</Banner>
              <Slicer $top={110}>
                <SlicerHead>Product type<SmallChev /></SlicerHead>
                <SlicerDrop>All<SmallChev /></SlicerDrop>
              </Slicer>
              <Slicer $top={249}>
                <SlicerHead>Customer demographics</SlicerHead>
                <SlicerDrop>All<SmallChev /></SlicerDrop>
              </Slicer>
              <ChartCard>
                <ChartTitle>Sum of Revenue generated by Product type</ChartTitle>
                <svg width="485" height="306" viewBox="0 0 485 306" style={{ display: "block" }} fontFamily={DIN}>
                  {[63.5, 131.5, 199.5, 267.5, 335.5, 403.5, 472.5].map((x, i) => (
                    <g key={x}>
                      <line x1={x} x2={x} y1={6} y2={276} stroke="#4a3d68" strokeDasharray="1.500 3" />
                      <text x={x} y={288} textAnchor="middle" fontSize="8.500" fontWeight="700" fill="#111">{`${i * 50}K`}</text>
                    </g>
                  ))}
                  {[[35, 58, 329, "skincare"], [111, 58, 237, "haircare"], [187, 57, 220, "cosmetics"]].map(([y, h, w, t]) => (
                    <g key={t as string}>
                      <rect x="63" y={y as number} width={w as number} height={h as number} fill="#9fd0fd" />
                      <text x="57" y={(y as number) + 33} textAnchor="end" fontSize="8.500" fontWeight="700" fill="#111">{t}</text>
                    </g>
                  ))}
                  <text x="267" y="301" textAnchor="middle" fontSize="10" fontWeight="700" fill="#94278f">Sum of Revenue generated</text>
                  <text transform="translate(13 142) rotate(-90)" textAnchor="middle" fontSize="10" fontWeight="700" fill="#ee6cb5">Product type</text>
                </svg>
              </ChartCard>
            </Page>
          </Canvas>
          <FilterPane>
            <FilterCollapse><Collapser c="#444" dir="l" /></FilterCollapse>
            <FilterGlyph><Ic s={10} v={10}><path d="M1 7h1M4 5v3M7.500 1.500v7" stroke="#555" strokeWidth="1.400" /></Ic></FilterGlyph>
            <FilterLabel>Filters</FilterLabel>
          </FilterPane>
        </CanvasRow>
        <TabBar>
          <ViewBtn $w={44} $on><Ic s={20} v={20}><rect x="3" y="3" width="14" height="10" rx="1" strokeWidth="1.500" stroke="#f0f0f0" /><path d="M10 13v2.500M6 16h8" strokeWidth="1.500" stroke="#f0f0f0" /></Ic></ViewBtn>
          <ViewBtn $w={44}><Ic s={20} v={20}><rect x="5.500" y="1.500" width="9" height="17" rx="1.500" strokeWidth="1.200" /><path d="M8.500 15.500h3" /></Ic></ViewBtn>
          <ViewBtn $w={16} $low><Ic s={10} v={10}><path d="M7 1L2.500 5 7 9z" stroke="#8ea0c0" /></Ic></ViewBtn>
          <ViewBtn $w={20} $low $ml={3}><Ic s={10} v={10}><path d="M3 1l4.500 4L3 9z" stroke="#8ea0c0" /></Ic></ViewBtn>
          <PageTab>Page 1</PageTab>
          <AddTab><Ic s={13} v={13}><path d="M6.500 1v11M1 6.500h11" stroke="#1c2a28" strokeWidth="2.400" /></Ic></AddTab>
        </TabBar>
      </Center>
      <Pane $w={181}>
        <PaneHead>Visualizations<Collapser /></PaneHead>
        <BuildLabel>Build visual</BuildLabel>
        <BuildTabs>
          <BuildTab $on>
            <Ic s={26} v={26}><path d="M1 1.500h19" stroke="#999" /><rect x=".5" y="5.500" width="25" height="9" fill="#2aa88f" stroke="#aaa" strokeDasharray="2 1.500" /><rect x=".5" y="16.500" width="25" height="8.500" fill="#2aa88f" stroke="#aaa" strokeDasharray="2 1.500" /></Ic>
          </BuildTab>
          <BuildTab $ml={33}>
            <Ic s={26} v={26}><path d="M13 24H2.500V1.500h12l6 6v4M14.500 1.500v6h6" stroke="#ccc" /><path d="M23 12l2 2-7 7-3-1z" stroke="#ccc" /><path d="M15 20c-3 0-5 2-5 4 3 1 7 0 8-3z" stroke="#ccc" fill="#888" /></Ic>
          </BuildTab>
        </BuildTabs>
        <Notched />
        <VizGrid>
          {viz.map((v, i) => (
            <VizCell key={i}>
              {isGlyph(v)
                ? <VizGlyph $size={v.size} $color={v.color} $weight={v.weight} $pb={v.pb}>{v.glyph}</VizGlyph>
                : <Ic s={18} v={18}>{v as React.ReactNode}</Ic>}
            </VizCell>
          ))}
        </VizGrid>
        <SolidRule />
        <FieldLabel $mt={9}>Values</FieldLabel>
        <DropWell $h={28} $mt={5} $pl={10}>Add data fields here</DropWell>
        <FieldLabel $bold $mt={11}>Drill through</FieldLabel>
        <ToggleRow $mt={8}>Cross-report<Toggle><Knob />Off</Toggle></ToggleRow>
        <ToggleRow $mt={11}>Keep all filters<Toggle $on>On<Knob $on /></Toggle></ToggleRow>
        <DropWell $h={26} $black $mt={11} $pl={8}>Add drill-through fields here</DropWell>
      </Pane>
      <Pane>
        <PaneHead>Data<Collapser /></PaneHead>
        <DataSearch>
          <Ic s={16} v={16}><circle cx="9.500" cy="6.500" r="5" stroke="#bbb" /><path d="M6 10l-4.500 4.500" stroke="#bbb" strokeWidth="1.200" /></Ic>
          Search
        </DataSearch>
        <TreeList>
          {["Inventory", "Manufacturing Table", "Supply Chain Table", "Sustainable Supply Ch...", "Sustainable Supply Ch..."].map((t, i) => (
            <TreeRow key={i}>
              <Ic s={10} v={10}><path d="M3 1l4 4-4 4" stroke="#ddd" /></Ic>
              <TableMini />
              <TreeName>{t}</TreeName>
            </TreeRow>
          ))}
        </TreeList>
      </Pane>
    </Main>
    <StatusBar>
      Page 1 of 1
      <ZoomBar>
        <svg width="124" height="14" viewBox="0 0 124 14" fill="none" stroke="#cfcfcf" style={{ display: "block" }}>
          <path d="M1 7.500h5" strokeWidth="1.500" /><path d="M10 7.500h100" /><rect x="41" y="3" width="4" height="10" fill="#cfcfcf" stroke="none" /><path d="M60.500 5v5" /><path d="M115 7.500h8M119 3.500v8" />
        </svg>
        <ZoomPct>69%</ZoomPct>
        <Ic s={14} v={14}><rect x=".5" y="2.500" width="13" height="9" stroke="#c8c0d8" rx="1" /><path d="M3 5v4M11 5v4" stroke="#c8c0d8" /></Ic>
      </ZoomBar>
    </StatusBar>
    <TaskBar>
      <StartBtn>
        <svg width="17" height="17" viewBox="0 0 17 17" fill="#fff"><path d="M0 2.300L7 1.300V8H0zM8 1.100L17 0v8H8zM0 9h7v6.700L0 14.700zM8 9h9v8L8 15.900z" /></svg>
      </StartBtn>
      <TaskSearch>
        <Ic s={18} v={18}><circle cx="10.500" cy="7" r="5.500" stroke="#222" strokeWidth="1.200" /><path d="M6.500 11L1.500 16" stroke="#222" strokeWidth="1.500" /></Ic>
        Type here to search
        <Doodle>
          <svg width="64" height="36" viewBox="0 0 64 36" style={{ display: "block" }}>
            <path d="M8 8l10 24" stroke="#d9a878" strokeWidth="2.500" /><circle cx="7" cy="6" r="5" fill="#e6bc90" />
            <path d="M56 8L44 32" stroke="#d9a878" strokeWidth="2.500" /><circle cx="57" cy="6" r="5.500" fill="#e6bc90" />
            <path d="M17 20c0-8 8-15 16-15 7 0 12 6 12 14 0 9-7 15-14 15-8 0-14-6-14-14z" fill="#7cb636" /><path d="M20 16c2-5 8-7 11-4 2 4-1 9-5 10-4 0-7-3-6-6z" fill="#d8402e" /><path d="M31 27c1-3 6-5 9-3 1 3-2 6-5 6-2 0-4-1-4-3z" fill="#d8402e" /><ellipse cx="36" cy="12" rx="4.500" ry="6.500" fill="#c9b6d6" /><circle cx="24" cy="29" r="3.500" fill="#b8d86a" />
          </svg>
        </Doodle>
      </TaskSearch>
      <TaskApps>
        <TaskApp $w={50}><Ic s={20} v={20}><path d="M2.500 5.500h11v9h-11zM2 2.500h12M2 17.500h12M17 3v3M17 9v1M17 13v1M16 4h2M16 9.500h2" stroke="#eee" /></Ic></TaskApp>
        <TaskApp $w={49}>
          <svg width="26" height="28" viewBox="0 0 26 28"><path d="M8 7V4a3 3 0 0 1 3-3h4a3 3 0 0 1 3 3v3" stroke="#2aa8ea" strokeWidth="2" fill="none" /><rect x="1" y="6" width="24" height="20" rx="3" fill="#f4f4f4" /><rect x="8" y="11" width="4.500" height="4.500" fill="#f25022" /><rect x="13.500" y="11" width="4.500" height="4.500" fill="#7fba00" /><rect x="8" y="16.500" width="4.500" height="4.500" fill="#00a4ef" /><rect x="13.500" y="16.500" width="4.500" height="4.500" fill="#ffb900" /></svg>
        </TaskApp>
        <TaskApp $w={50}>
          <svg width="26" height="24" viewBox="0 0 26 24"><path d="M6 5l10-5 8 5v14a2 2 0 0 1-2 2H8a2 2 0 0 1-2-2z" fill="#28a8ea" /><path d="M6 5l10-5 8 5-9 6z" fill="#0f78d4" /><path d="M6 11l9 5 9-5v8a2 2 0 0 1-2 2H8a2 2 0 0 1-2-2z" fill="#50d9ff" /><rect x="0" y="6" width="13" height="13" rx="1" fill="#0f6cbd" /><text x="6.500" y="16.500" fontFamily={UI} fontSize="11" fontWeight="700" fill="#fff" textAnchor="middle">O</text></svg>
        </TaskApp>
        <TaskApp $w={49}>
          <svg width="24" height="24" viewBox="0 0 24 24"><circle cx="12" cy="12" r="12" fill="#1b9de2" /><path d="M12 0c7 0 12 5 12 11 0 3-3 5-6 5-2 0-5-1-5-3 0-3 4-2 4-5C17 4 13 2 9 3 5 4 2 8 1 11 2 5 6 0 12 0z" fill="#52d17c" /><path d="M1 12c0-5 5-8 9-6-3 1-4 4-4 7 0 4 3 8 7 9 2 1 3 1 5 0-5 4-17 1-17-10z" fill="#0c59a4" /></svg>
        </TaskApp>
        <TaskApp $w={49}>
          <svg width="24" height="24" viewBox="0 0 24 24"><circle cx="12" cy="12" r="12" fill="#db4437" /><path d="M12 24a12 12 0 0 0 10.400-18H12l6 4-6 14z" fill="#fbbc05" /><path d="M1.600 6L7 15l5 9A12 12 0 0 1 1.600 6z" fill="#34a853" /><circle cx="12" cy="12" r="5.500" fill="#4285f4" stroke="#fff" strokeWidth="1.500" /></svg>
        </TaskApp>
        <TaskApp $w={49} $run>
          <svg width="22" height="20" viewBox="0 0 22 20"><path d="M0 1h8l2 2h12v15H0z" fill="#e8b23a" /><rect x="0" y="5" width="22" height="14" fill="#f4d26a" /><path d="M7 19v-6l4-3 4 3v6h-3v-4h-2v4z" fill="#3a96dd" /></svg>
        </TaskApp>
        <TaskApp $w={49} $run>
          <svg width="26" height="26" viewBox="0 0 26 26"><circle cx="12" cy="12" r="12" fill="#db4437" /><path d="M12 24a12 12 0 0 0 10.400-18H12l6 4-6 14z" fill="#fbbc05" /><path d="M1.600 6L7 15l5 9A12 12 0 0 1 1.600 6z" fill="#34a853" /><circle cx="12" cy="12" r="5.500" fill="#4285f4" stroke="#fff" strokeWidth="1.500" /><circle cx="18" cy="19" r="7" fill="#2f3a33" /><path d="M14 18l4-4 4 4-2 5h-4z" fill="#c9d4c8" /></svg>
        </TaskApp>
        <TaskApp $w={49} $run>
          <svg width="24" height="22" viewBox="0 0 24 22"><path d="M7 0l14 3 2 15-15 3-7-7z" fill="#dfeef2" /><path d="M7 0l14 3-6 15L1 14z" fill="#8cc3d0" /><path d="M7 0L1 14l1 1L8 2z" fill="#4f8a9c" /></svg>
        </TaskApp>
        <TaskApp $w={49} $run>
          <svg width="20" height="24" viewBox="0 0 20 24"><rect x="0" y="10" width="8" height="14" rx="1" fill="#f6dc6a" /><rect x="6" y="5" width="8" height="19" rx="1" fill="#f2c811" /><rect x="12" y="0" width="8" height="24" rx="1" fill="#d9a606" /></svg>
        </TaskApp>
        <TaskApp $w={49} $run>
          <svg width="26" height="22" viewBox="0 0 26 22"><rect x="6" y="0" width="20" height="22" rx="1.500" fill="#2b7cd3" /><rect x="6" y="0" width="20" height="6" fill="#41a5ee" /><rect x="6" y="11" width="20" height="6" fill="#185abd" /><rect x="6" y="17" width="20" height="5" fill="#103f91" /><rect x="0" y="5" width="13" height="13" rx="1" fill="#1a5fbf" /><text x="6.500" y="15.500" fontFamily={UI} fontSize="10" fontWeight="700" fill="#fff" textAnchor="middle">W</text></svg>
        </TaskApp>
      </TaskApps>
      <Tray>
        <Weather>34°C  Haze</Weather>
        <TrayIcon $w={28} $ml={14}><Ic s={14} v={14}><path d="M1 10l6-6 6 6" strokeWidth="1.300" stroke="#eee" /></Ic></TrayIcon>
        <TrayIcon $w={20}><svg width="14" height="14" viewBox="0 0 14 14"><circle cx="7" cy="7" r="7" fill="#1d5a9c" /><path d="M9 0L3 8h3L4 14l7-8H8z" fill="#f5a623" /></svg></TrayIcon>
        <TrayIcon $w={28}><Ic s={16} v={16}><rect x="1" y="4" width="13" height="8" strokeWidth="1.300" stroke="#eee" /><rect x="2.500" y="5.500" width="7" height="5" fill="#eee" stroke="none" /><path d="M15 7v2" stroke="#eee" /></Ic></TrayIcon>
        <TrayIcon $w={20}><Ic s={17} v={17}><circle cx="8" cy="8" r="7" stroke="#eee" /><ellipse cx="8" cy="8" rx="3" ry="7" stroke="#eee" /><path d="M1 8h14M2 4.500h12M2 11.500h12" stroke="#eee" /><circle cx="13" cy="13" r="3" fill="#333" stroke="#eee" /><path d="M11 11l4 4" stroke="#eee" /></Ic></TrayIcon>
        <TrayIcon $w={26}><Ic s={17} v={17}><path d="M2 6h3l4-3.500v12L5 11H2zM11.500 6a3 3 0 0 1 0 5M13.500 4a6 6 0 0 1 0 9" stroke="#eee" /></Ic></TrayIcon>
        <Lang>ENG</Lang>
        <Clock>05:38 PM<br />24-03-2025</Clock>
        <TrayIcon $w={44}>
          <svg width="26" height="24" viewBox="0 0 26 24" style={{ marginTop: 2 }}><path d="M1 0h16v12h-9l-3 3v-3H1z" fill="#fff" /><path d="M4 3h10M4 6h10M4 9h6" stroke="#333" /><circle cx="17" cy="15" r="8" fill="#3a3632" stroke="#888" /><text x="17" y="19" fontFamily={UI} fontSize="11" fontWeight="700" fill="#eee" textAnchor="middle">3</text></svg>
        </TrayIcon>
      </Tray>
      <NewsSlot>
        <svg width="24" height="20" viewBox="0 0 24 20" fill="none" stroke="#eee" strokeWidth="1.200"><path d="M1 2h18v16H3a2 2 0 0 1-2-2zM19 4h4v12a2 2 0 0 1-2 2h-2" /><path d="M4 6h13M4 9h6v5H4zM12 10h5M12 13h5" /></svg>
      </NewsSlot>
    </TaskBar>
    <Cursor>
      <svg width="14" height="20" viewBox="0 0 14 20"><path d="M1 1v15l4-3.500 2.500 6 2.500-1-2.500-6H13z" fill="#fff" stroke="#000" /></svg>
    </Cursor>
  </Shell>
);

export default App;
